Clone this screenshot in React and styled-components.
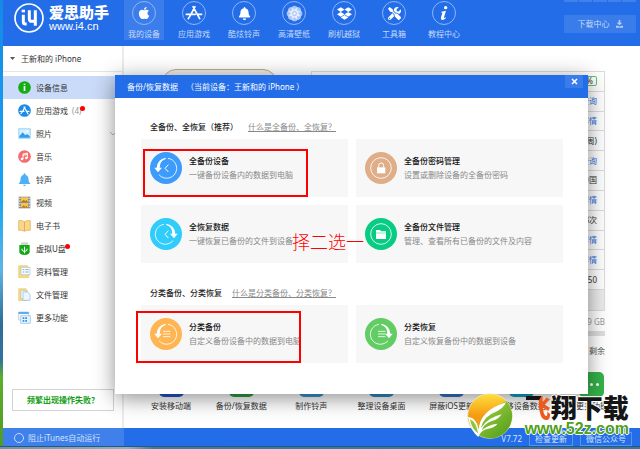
import React, { useState } from 'react'
import styled, { createGlobalStyle } from 'styled-components'
import { FaApple, FaBell, FaDropbox, FaTools } from 'react-icons/fa'

const GlobalStyle = createGlobalStyle`
  * {
    box-sizing: border-box;
  }
  body {
    margin: 0;
    background: #fff;
    font-family: "Noto Sans", "Noto Sans CJK SC", sans-serif;
    font-size: 8px;
    line-height: 12px;
    color: #333;
  }
  button {
    font: inherit;
    border: 0;
    padding: 0;
    background: none;
    cursor: pointer;
  }
  a {
    text-decoration: none;
  }
  svg {
    display: block;
    flex-shrink: 0;
  }
`

const Desktop = styled.div`
  position: relative;
  display: flex;
  flex-direction: column;
  min-height: 100vh;
  padding-left: 3px;
  background: linear-gradient(180deg, #1789e8 0%, #18a6f2 45%, #5fb4e6 60%, #2f6f96 72%, #2d72a0 80%, #5fae2c 84%, #4f9a25 100%);
`
const Taskbar = styled.div`
  height: 3px;
  margin-left: -3px;
  background: linear-gradient(90deg, #6f93ad 0%, #8fb0c6 20%, #3f7aa3 24%, #2f78ab 100%);
  border-top: 1px solid #2c5878;
`

/* header */
const Header = styled.header`
  display: flex;
  height: 46px;
  background: #236de8;
  color: #fff;
`
const Brand = styled.a`
  display: flex;
  gap: 5px;
  width: 121px;
  padding: 3px 0 0 11px;
  color: #fff;
`
const BrandText = styled.div`
  display: flex;
  flex-direction: column;
`
const BrandName = styled.span`
  font-size: 15px;
  font-weight: 900;
  line-height: 18px;
`
const BrandSite = styled.span`
  font-family: "Liberation Sans", sans-serif;
  font-size: 11px;
  line-height: 10px;
`
const Nav = styled.nav`
  display: flex;
  flex: 1;
  gap: 10px;
`
const NavItem = styled.button`
  display: flex;
  flex-direction: column;
  align-items: center;
  gap: 3px;
  width: 40px;
  height: 40px;
  padding-top: 1px;
  color: #c6dafb;
  background: ${(props) => (props.$active ? '#3a7deb' : 'transparent')};
`
const NavCircle = styled.span`
  display: flex;
  justify-content: center;
  align-items: center;
  width: 24px;
  height: 24px;
  border: 1px solid #8fb6f5;
  border-radius: 50%;
  color: #fff;
`
const HeaderRight = styled.div`
  display: flex;
  flex-direction: column;
  gap: 13px;
  width: 72px;
  margin-right: 4px;
`
const WindowControls = styled.div`
  display: grid;
  grid-template-columns: repeat(5, 1fr);
  gap: 1px;
  height: 2px;
  span {
    background: #4280eb;
  }
`
const DownloadButton = styled.button`
  display: flex;
  justify-content: center;
  align-items: center;
  gap: 6px;
  height: 18px;
  background: #3a7ce9;
  color: #c6dafb;
`

/* body */
const Body = styled.div`
  display: flex;
  flex: 1;
  background: #fff;
`
const Sidebar = styled.aside`
  display: flex;
  flex-direction: column;
  width: 121px;
  border-right: 2px solid #ebebeb;
`
const DeviceRow = styled.button`
  display: flex;
  align-items: center;
  gap: 6px;
  height: 26px;
  margin-bottom: 4px;
  padding-left: 7px;
  border-bottom: 1px solid #e6e6e6;
  color: #333;
`
const MenuItem = styled.button`
  display: flex;
  align-items: center;
  gap: 5px;
  width: 100%;
  height: 23px;
  padding: 0 6px 0 15px;
  color: #333;
  background: ${(props) => (props.$active ? '#c9dbf8' : 'transparent')};
`
const MenuLabel = styled.span`
  position: relative;
`
const Count = styled.span`
  margin-left: 4px;
  color: #999;
`
const Dot = styled.i`
  position: absolute;
  top: 1px;
  right: -4px;
  width: 5px;
  height: 5px;
  border-radius: 50%;
  background: #f00;
`
const Chevron = styled.svg`
  margin-left: auto;
`
const TroubleButton = styled.button`
  height: 22px;
  margin: auto 8px 17px 9px;
  border: 1px solid #d2d2d2;
  background: #fff;
  color: #12a012;
  font-weight: 700;
`
const Main = styled.main`
  display: flex;
  flex: 1;
  flex-direction: column;
  min-width: 0;
  padding: 23px 0 16px;
`
const DeviceArea = styled.section`
  display: flex;
  align-items: flex-start;
  gap: 34px;
  padding: 0 35px 0 38px;
`
const Phone = styled.div`
  width: 115px;
  height: 236px;
  border: 1px solid #c4a98a;
  border-radius: 14px;
  background: #f0ece8;
`
const Details = styled.div`
  flex: 1;
  padding-top: 2px;
`
const InfoTable = styled.table`
  width: 100%;
  height: 219px;
  border: 1px solid #dcdcdc;
  border-collapse: collapse;
  td {
    padding: 0 7px 0 0;
    border-bottom: 1px solid #dcdcdc;
    text-align: right;
  }
  a {
    color: #2f74e0;
  }
`
const Battery = styled.span`
  display: inline-block;
  padding: 0 3px;
  border: 1px solid #5cc46a;
  border-radius: 2px;
  line-height: 8px;
`
const Swatch = styled.div`
  height: 21px;
  border: 1px solid #dcdcdc;
  border-top: 0;
  background: #ececec;
`
const Storage = styled.div`
  padding-top: 5px;
  text-align: right;
  color: #999;
`
const StorageBar = styled.div`
  height: 5px;
  margin: 3px 0 9px;
  background: #dedede;
`
const Remaining = styled.span`
  color: #555;
`
const Apps = styled.section`
  display: grid;
  grid-template-columns: repeat(7, 1fr);
  margin-top: auto;
  padding: 0 13px 0 12px;
`
const AppButton = styled.button`
  display: flex;
  flex-direction: column;
  align-items: center;
  gap: 3px;
  color: #333;
  white-space: nowrap;
`
const AppIcon = styled.span`
  display: flex;
  justify-content: center;
  align-items: center;
  width: 25px;
  height: 25px;
  border-radius: 5px;
  background: ${(props) => props.$color};
`

/* footer */
const Footer = styled.footer`
  display: flex;
  height: 18px;
  background: #236de8;
  color: #d5e3fb;
`
const AutoRun = styled.label`
  display: flex;
  align-items: center;
  gap: 4px;
  width: 121px;
  padding: 2px 0 0 11px;
  background: #3f80ea;
  input {
    appearance: none;
    width: 10px;
    height: 10px;
    margin: 0;
    border: 1px solid #c6dafb;
    border-radius: 50%;
  }
`
const FooterRight = styled.div`
  display: flex;
  align-items: center;
  gap: 7px;
  margin: 3px 8px 0 auto;
`
const FooterButton = styled.button`
  height: 14px;
  padding: 0 5px;
  border: 1px solid #5b92ee;
  color: #d5e3fb;
`

/* dialog */
const DialogLayer = styled.div`
  position: absolute;
  inset: 0;
  display: flex;
  align-items: flex-start;
  padding: 75px 52px 55px 115px;
`
const Dialog = styled.section`
  flex: 1;
  background: #fff;
  box-shadow: 0 4px 20px rgba(0, 0, 0, 0.45);
`
const DialogHeader = styled.header`
  display: flex;
  justify-content: space-between;
  height: 23px;
  padding: 0 5px 0 12px;
  background: #236de8;
  color: #fff;
  line-height: 23px;
`
const DialogTitle = styled.h1`
  display: flex;
  gap: 8px;
  margin: 0;
  font-size: 8px;
  font-weight: 400;
`
const CloseButton = styled.button`
  display: flex;
  justify-content: center;
  align-items: center;
  width: 18px;
  height: 13px;
  background: #3a7ce9;
`
const DialogBody = styled.div`
  display: flex;
  flex-direction: column;
  gap: 22px;
  padding: 21px 25px 31px 26px;
`
const GroupHeader = styled.div`
  display: flex;
  align-items: center;
  gap: 10px;
  height: 16px;
  margin-bottom: 4px;
  padding-left: 9px;
  a {
    color: #888;
    text-decoration: underline;
  }
`
const GroupTitle = styled.h2`
  margin: 0;
  font-size: 8px;
  font-weight: 500;
  color: #222;
`
const CardGrid = styled.div`
  display: grid;
  grid-template-columns: 1fr 1fr;
  gap: 8px;
`
const Card = styled.button`
  position: relative;
  display: flex;
  align-items: center;
  gap: 7px;
  height: 58px;
  padding-left: 9px;
  background: #f7f7f7;
  text-align: left;
`
const CardText = styled.span`
  display: flex;
  flex-direction: column;
  gap: 2px;
`
const CardTitle = styled.span`
  color: #111;
  font-weight: 500;
`
const CardDesc = styled.span`
  color: #888;
`

/* annotations drawn over the dialog */
const Mark = styled.span`
  position: absolute;
  left: ${(props) => props.$left}px;
  top: ${(props) => props.$top}px;
  width: 165px;
  height: ${(props) => props.$h}px;
  border: 2px solid #f00;
`
const Note = styled.span`
  position: absolute;
  left: 151px;
  top: 26px;
  z-index: 1;
  color: #f00;
  font-family: "Noto Sans CJK SC", sans-serif;
  font-size: 18px;
  font-weight: 300;
  line-height: 20px;
  white-space: nowrap;
`
const Watermark = styled.div`
  position: absolute;
  right: 11px;
  bottom: 10px;
  display: flex;
  align-items: center;
  gap: 12px;
`
const WatermarkText = styled.div`
  display: flex;
  flex-direction: column;
  color: #151515;
  text-shadow: 1px 0 #fff, -1px 0 #fff, 0 1px #fff, 0 -1px #fff;
`
const WatermarkName = styled.span`
  font-size: 26px;
  font-weight: 900;
  line-height: 26px;
  em {
    font-style: normal;
    color: transparent;
    text-shadow: none;
    background: linear-gradient(120deg, #151515 42%, #ee5a1c 43%);
    background-clip: text;
  }
`
const WatermarkSite = styled.span`
  font-family: "Liberation Sans", sans-serif;
  font-size: 16px;
  font-weight: 700;
  line-height: 16px;
  color: #4fa019;
`

const Logo = () => (
  <svg width="30" height="30" viewBox="0 0 90 90" fill="none" stroke="#fff">
    <circle cx="45" cy="45" r="42" strokeWidth="5" />
    <path d="M28 35v22q0 6 7 6h3" strokeWidth="9" />
    <path d="M23 24h10" strokeWidth="8" />
    <path d="M46 22v25q0 8 8 8h11M64 22v46" strokeWidth="9" />
  </svg>
)

const AppStoreGlyph = ({ size = 18 }) => (
  <svg width={size} height={size} viewBox="0 0 54 54" fill="none" stroke="#fff" strokeWidth="5" strokeLinecap="round">
    <path d="M30 8 14 38M24 8l20 36M4 31h27M39 31h11M10 44l2-4" />
  </svg>
)
const FlowerGlyph = () => (
  <svg width="17" height="17" viewBox="-26 -26 52 52" fill="#fff">
    {[0, 45, 90, 135, 180, 225, 270, 315].map((deg) => (
      <circle key={deg} cx="0" cy="-15" r="9" opacity=".6" transform={`rotate(${deg})`} />
    ))}
    <circle r="12" opacity=".5" />
    <circle r="4" />
  </svg>
)
const InfoGlyph = () => (
  <svg width="14" height="16" viewBox="0 0 42 48" fill="#fff">
    <circle cx="26" cy="8" r="5" />
    <path d="M13 20q8-1 14-3l-6 20q-1 4 5 0l1 2q-7 7-12 6-5-1-3-8l4-13q0-2-4-2z" />
  </svg>
)
const DownloadGlyph = () => (
  <svg width="7" height="8" viewBox="0 0 21 24" fill="#b5cffa">
    <path d="M8 0h5v8h6l-8.500 8L2 8h6zM0 17h6l5 3 5-3h5v6H0z" />
  </svg>
)

const sideIcons = {
  info: (
    <>
      <circle cx="19.500" cy="19.500" r="19" fill="#14ae14" />
      <path d="M17 15h5v15h-5zM17 8h5v4h-5z" fill="#fff" />
    </>
  ),
  apps: (
    <>
      <circle cx="19.500" cy="19.500" r="19" fill="#1b8bea" />
      <path d="m21 9-9 16M18 9l10 17M6 22h12M25 22h8M9 29l1-2M30 30l-1-2" fill="none" stroke="#fff" strokeWidth="3.500" strokeLinecap="round" />
    </>
  ),
  photo: (
    <>
      <path d="M1 4h37v31H1z" fill="#8fd0f8" />
      <path d="M4 7h31v25H4z" fill="#d9f1fe" />
      <path d="M4 28l10-12 8 9 5-4 8 6v5H4z" fill="#2c9df0" />
      <circle cx="28" cy="13" r="3" fill="#fff" />
    </>
  ),
  music: (
    <>
      <circle cx="19.500" cy="19.500" r="19" fill="#f56b6e" />
      <path d="M15 27V12l13-3v15M15 16l13-3" fill="none" stroke="#fff" strokeWidth="3" />
      <circle cx="12" cy="27" r="4" fill="#fff" />
      <circle cx="25" cy="24" r="4" fill="#fff" />
    </>
  ),
  bell: (
    <path d="M19.500 1q3 0 3 4 9 3 9 14 0 9 5 12v2h-34v-2q5-3 5-12 0-11 9-14 0-4 3-4zM15 35h9q-1 4-4.500 4T15 35z" fill="#4fb0f6" />
  ),
  video: (
    <>
      <path d="M2 2h35v35H2z" fill="#8d8d8d" />
      <path d="M9 4h21v14H9zM9 21h21v14H9z" fill="#f6c550" />
      <path d="M4 5h3v4H4zm0 8h3v4H4zm0 8h3v4H4zm0 8h3v4H4zM32 5h3v4h-3zm0 8h3v4h-3zm0 8h3v4h-3zm0 8h3v4h-3z" fill="#fff" />
      <path d="M9 18l8-7 5 4 4-3 4 6zM9 35l8-7 5 4 4-3 4 6z" fill="#b77b1d" />
    </>
  ),
  book: (
    <>
      <path d="M2 5q10-2 17 3 8-5 18-3v29q-10-2-18 3-7-5-17-3z" fill="#fbd68a" stroke="#e2a94c" strokeWidth="2" />
      <path d="M19.500 8v28" stroke="#d99a3c" strokeWidth="2" />
    </>
  ),
  usb: (
    <>
      <path d="M9 1h21v9H9z" fill="#cfd8cf" />
      <path d="M4 9h31v20q0 8-15.500 10Q4 37 4 29z" fill="#13a913" />
      <path d="M19.500 14v20M12 20v5l7.500 4 7.500-4v-5" fill="none" stroke="#fff" strokeWidth="3" />
    </>
  ),
  data: (
    <>
      <path d="M2 2h26l4 6v30H2z" fill="#f8da85" stroke="#e5bc55" strokeWidth="1.500" />
      <path d="M9 7h27v22H9z" fill="#fff" stroke="#9fbfd8" strokeWidth="2" />
      <path d="M14 14h5M22 14h10M14 21h5M22 21h10" stroke="#4f9ce0" strokeWidth="2.500" />
    </>
  ),
  file: (
    <>
      <path d="M2 2h22l4 6v30H2z" fill="#f8da85" stroke="#e5bc55" strokeWidth="1.500" />
      <path d="M9 8h15v24H9z" fill="#fff" stroke="#9fbfd8" strokeWidth="2" />
      <path d="M15 12h14l7 7v18H15z" fill="#eef7ff" stroke="#8bb9e0" strokeWidth="2" />
    </>
  ),
  more: (
    <>
      <path d="M2 3h30v24H2z" fill="#fff" stroke="#9fb8cc" strokeWidth="2" />
      <path d="M2 3h30v6H2z" fill="#5aaef0" />
      <path d="M8 14h29v23H8z" fill="#e6f3fe" stroke="#8bb9e0" strokeWidth="2" />
      <path d="M14 19h5v5h-5zm8 0h5v5h-5zm-8 8h5v5h-5zm8 0h5v5h-5z" fill="#2d8fe8" />
    </>
  ),
}

const SideIcon = ({ name }) => (
  <svg width="13" height="13" viewBox="0 0 39 39">
    {sideIcons[name]}
  </svg>
)

const inner = {
  chevron: <path d="m55 38-10 11 10 11" fill="none" stroke="#fff" strokeWidth="3" />,
  lines: <path d="M39 40h22M39 48h22M39 56h22" stroke="#fff" strokeWidth="2.500" />,
  lock: (
    <>
      <path d="M36 46h25v18H36z" fill="#fff" />
      <path d="M41 46v-6q0-7 7.500-7t7.500 7v6" fill="none" stroke="#fff" strokeWidth="3" />
    </>
  ),
  folder: <path d="M33 36h12l3 4h15v4H33zM33 46h30v17H33z" fill="#fff" />,
}

const CardIcon = ({ color, glyph, arrow }) => (
  <svg width="32" height="32" viewBox="0 0 96 96">
    <circle cx="48" cy="48" r="48" fill={color} />
    {!arrow && <circle cx="48" cy="48" r="31" fill="none" stroke="#fff" strokeWidth="2.500" />}
    {arrow && (
      <g transform={arrow === 'right' ? 'matrix(-1 0 0 1 96 0)' : undefined}>
        <path d="M54 19A30 30 0 1 1 27 68" fill="none" stroke="#fff" strokeWidth="2.500" />
        <path d="M47 17Q22 22 20 47h-7l11 14 12-14h-7q0-21 18-26z" fill="#fff" />
      </g>
    )}
    {inner[glyph]}
  </svg>
)

const BirdLogo = () => (
  <svg width="46" height="46" viewBox="0 0 138 138">
    <defs>
      <linearGradient id="sun" x1="0" y1="0" x2="0" y2="1">
        <stop offset="0" stopColor="#ffe03c" />
        <stop offset=".5" stopColor="#f59a12" />
      </linearGradient>
      <linearGradient id="leaf" x1="0" y1="0" x2="1" y2="1">
        <stop offset="0" stopColor="#b4dc44" />
        <stop offset="1" stopColor="#4c9a1c" />
      </linearGradient>
    </defs>
    <circle cx="69" cy="69" r="67" fill="url(#sun)" stroke="#e9f5cf" strokeWidth="2" />
    <path d="M4 76q20 4 30 28Q40 62 118 24a67 67 0 0 1-49 112Q18 132 4 76z" fill="url(#leaf)" />
    <path d="M3 72q27 2 32 38 4-58 82-82-7 17-27 27-42 15-48 51 18-32 62-42-10 15-29 20-24 8-31 28 18-17 48-20-12 13-29 15-22 4-29 25Q12 116 3 72z" fill="#fff" />
    <path d="M9 79q19 7 24 42Q14 108 9 79z" fill="#8cc63a" />
  </svg>
)

const navList = [
  { label: '我的设备', icon: <FaApple size={14} /> },
  { label: '应用游戏', icon: <AppStoreGlyph /> },
  { label: '酷炫铃声', icon: <FaBell size={13} /> },
  { label: '高清壁纸', icon: <FlowerGlyph /> },
  { label: '刷机越狱', icon: <FaDropbox size={15} /> },
  { label: '工具箱', icon: <FaTools size={13} /> },
  { label: '教程中心', icon: <InfoGlyph /> },
]

const menuList = [
  { label: '设备信息', icon: 'info' },
  { label: '应用游戏', icon: 'apps', count: 4, dot: true },
  { label: '照片', icon: 'photo', expand: true },
  { label: '音乐', icon: 'music' },
  { label: '铃声', icon: 'bell' },
  { label: '视频', icon: 'video' },
  { label: '电子书', icon: 'book' },
  { label: '虚拟U盘', icon: 'usb', dot: true },
  { label: '资料管理', icon: 'data' },
  { label: '文件管理', icon: 'file' },
  { label: '更多功能', icon: 'more' },
]

const infoRows = [
  { text: '%', battery: true },
  { text: '查询', link: true },
  { text: '详情', link: true },
  { text: '周)' },
  { text: '查询', link: true },
  { text: '中国' },
  { text: '详情', link: true },
  { text: '8次' },
  { text: '详情', link: true },
  { text: '详情', link: true },
  { text: '50' },
]

const appList = [
  { label: '安装移动端', color: '#1f57c9' },
  { label: '备份/恢复数据', color: '#2f9e3f' },
  { label: '制作铃声', color: '#3794d6' },
  { label: '整理设备桌面', color: '#3388c4' },
  { label: '屏蔽iOS更新', color: '#3572c8' },
  { label: '迁移设备数据', color: '#12a0c8' },
  { label: '更多功能', color: '#35b24a', dots: true },
]

const groups = [
  {
    title: '全备份、全恢复（推荐）',
    help: '什么是全备份、全恢复？',
    cards: [
      { title: '全备份设备', desc: '一键备份设备内的数据到电脑', color: '#3d9bfb', glyph: 'chevron', arrow: 'left', mark: { $left: 2, $top: 10, $h: 48 } },
      { title: '全备份密码管理', desc: '设置或删除设备的全备份密码', color: '#dfad88', glyph: 'lock' },
      { title: '全恢复数据', desc: '一键恢复已备份的文件到设备', color: '#30ccfb', glyph: 'chevron', arrow: 'right', note: '择二选一' },
      { title: '全备份文件管理', desc: '管理、查看所有已备份的文件及内容', color: '#08cc84', glyph: 'folder' },
    ],
  },
  {
    title: '分类备份、分类恢复',
    help: '什么是分类备份、分类恢复？',
    cards: [
      { title: '分类备份', desc: '自定义备份设备中的数据到电脑', color: '#ffb652', glyph: 'lines', arrow: 'left', mark: { $left: -5, $top: 6, $h: 52 } },
      { title: '分类恢复', desc: '自定义恢复备份中的数据到设备', color: '#62cd64', glyph: 'lines', arrow: 'right' },
    ],
  },
]

const BackupDialog = ({ onClose }) => {
  return (
    <DialogLayer>
      <Dialog role="dialog" aria-label="备份/恢复数据">
        <DialogHeader>
          <DialogTitle>
            <span>备份/恢复数据</span>
            <span>（当前设备：王新和的 iPhone ）</span>
          </DialogTitle>
          <CloseButton aria-label="关闭" onClick={onClose}>
            <svg width="7" height="7" viewBox="0 0 7 7" stroke="#fff" strokeWidth="1.500">
              <path d="m1 1 5 5M6 1 1 6" />
            </svg>
          </CloseButton>
        </DialogHeader>
        <DialogBody>
          {groups.map((group) => (
            <div key={group.title}>
              <GroupHeader>
                <GroupTitle>{group.title}</GroupTitle>
                <a href="#help">{group.help}</a>
              </GroupHeader>
              <CardGrid>
                {group.cards.map((card) => (
                  <Card key={card.title}>
                    <CardIcon color={card.color} glyph={card.glyph} arrow={card.arrow} />
                    <CardText>
                      <CardTitle>{card.title}</CardTitle>
                      <CardDesc>{card.desc}</CardDesc>
                    </CardText>
                    {card.mark && <Mark {...card.mark} />}
                    {card.note && <Note>{card.note}</Note>}
                  </Card>
                ))}
              </CardGrid>
            </div>
          ))}
        </DialogBody>
      </Dialog>
    </DialogLayer>
  )
}

export default function App() {
  const [navIdx, setNavIdx] = useState(0)
  const [menuIdx, setMenuIdx] = useState(0)
  const [isOpen, setOpen] = useState(true)

  return (
    <>
      <GlobalStyle />
      <Desktop>
        <Header>
          <Brand href="#home">
            <Logo />
            <BrandText>
              <BrandName>爱思助手</BrandName>
              <BrandSite>www.i4.cn</BrandSite>
            </BrandText>
          </Brand>
          <Nav>
            {navList.map((item, idx) => (
              <NavItem key={item.label} $active={navIdx === idx} onClick={() => setNavIdx(idx)}>
                <NavCircle>{item.icon}</NavCircle>
                {item.label}
              </NavItem>
            ))}
          </Nav>
          <HeaderRight>
            <WindowControls>
              <span /><span /><span /><span /><span />
            </WindowControls>
            <DownloadButton>
              下载中心
              <DownloadGlyph />
            </DownloadButton>
          </HeaderRight>
        </Header>

        <Body>
          <Sidebar>
            <DeviceRow>
              <svg width="5" height="3" viewBox="0 0 5 3">
                <path d="M0 0h5L2.500 3z" fill="#555" />
              </svg>
              王新和的 iPhone
            </DeviceRow>
            {menuList.map((item, idx) => (
              <MenuItem key={item.label} $active={menuIdx === idx} onClick={() => setMenuIdx(idx)}>
                <SideIcon name={item.icon} />
                <MenuLabel>
                  {item.label}
                  {item.count && <Count>({item.count})</Count>}
                  {item.dot && <Dot />}
                </MenuLabel>
                {item.expand && (
                  <Chevron width="6" height="4" viewBox="0 0 6 4" fill="none" stroke="#bbb">
                    <path d="m0 0 3 3 3-3" />
                  </Chevron>
                )}
              </MenuItem>
            ))}
            <TroubleButton>频繁出现操作失败？</TroubleButton>
          </Sidebar>

          <Main>
            <DeviceArea>
              <Phone />
              <Details>
                <InfoTable>
                  <tbody>
                    {infoRows.map((row, idx) => (
                      <tr key={idx}>
                        <td>
                          {row.battery && <Battery>{row.text}</Battery>}
                          {row.link && <a href="#detail">{row.text}</a>}
                          {!row.battery && !row.link && row.text}
                        </td>
                      </tr>
                    ))}
                  </tbody>
                </InfoTable>
                <Swatch />
                <Storage>
                  9 GB
                  <StorageBar />
                  <Remaining>剩余</Remaining>
                </Storage>
              </Details>
            </DeviceArea>
            <Apps>
              {appList.map((app) => (
                <AppButton key={app.label}>
                  <AppIcon $color={app.color}>
                    {app.dots && (
                      <svg width="15" height="3" viewBox="0 0 15 3" fill="#fff">
                        <circle cx="1.500" cy="1.500" r="1.500" />
                        <circle cx="7.500" cy="1.500" r="1.500" />
                        <circle cx="13.500" cy="1.500" r="1.500" />
                      </svg>
                    )}
                  </AppIcon>
                  {app.label}
                </AppButton>
              ))}
            </Apps>
          </Main>
        </Body>

        <Footer>
          <AutoRun>
            <input type="checkbox" />
            阻止iTunes自动运行
          </AutoRun>
          <FooterRight>
            <span>V7.72</span>
            <FooterButton>检查更新</FooterButton>
            <FooterButton>微信公众号</FooterButton>
          </FooterRight>
        </Footer>
        <Taskbar />

        {isOpen && <BackupDialog onClose={() => setOpen(false)} />}

        <Watermark>
          <BirdLogo />
          <WatermarkText>
            <WatermarkName><em>飞</em>翔下载</WatermarkName>
            <WatermarkSite>www.52z.com</WatermarkSite>
          </WatermarkText>
        </Watermark>
      </Desktop>
    </>
  )
}
